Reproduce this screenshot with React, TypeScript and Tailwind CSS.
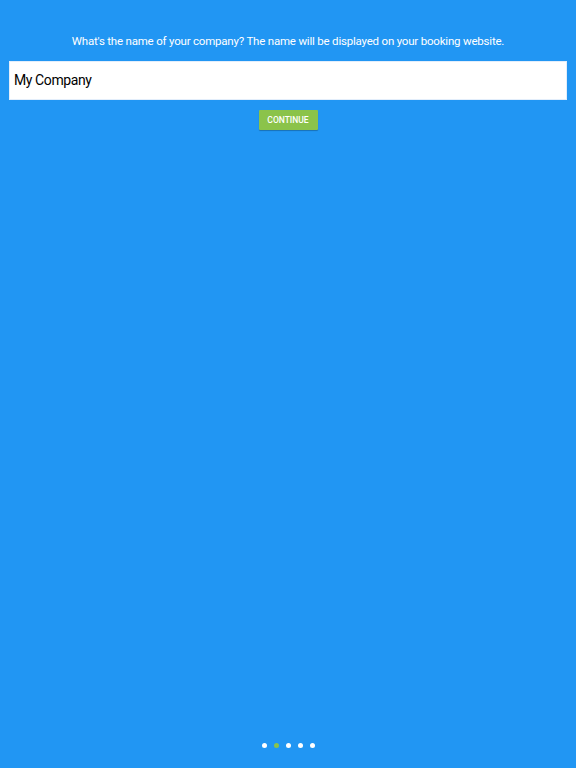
export default function App() {
  const dots = [false, true, false, false, false];

  return (
    <div className="flex h-[768px] w-full flex-col bg-[#2196f3] font-['Roboto',_'Liberation_Sans',_sans-serif]">
      <div className="flex flex-col items-center">
        <p className="mt-[34px] text-center text-[11.5px] leading-[15px] tracking-[-0.2px] text-white">
          What's the name of your company? The name will be displayed on your booking website.
        </p>

        <div className="mt-[12px] w-full px-[9px]">
          <input
            defaultValue="My Company"
            className="h-[39px] w-full border border-[#e3eefb] bg-white px-[4px] pb-[1px] text-[14px] tracking-[-0.4px] text-black outline-none"
          />
        </div>

        <button className="mt-[10px] h-[20px] w-[59px] rounded-[1px] bg-[#8bc34a] text-[8.5px] font-medium text-white shadow-[0_1px_1px_rgba(0,0,0,0.25)]">
          CONTINUE
        </button>
      </div>

      <div className="mt-auto mb-[20px] flex justify-center gap-[7px]">
        {dots.map((active, i) => (
          <span
            key={i}
            className={active ? "h-[5px] w-[5px] rounded-full bg-[#8bc34a]" : "h-[5px] w-[5px] rounded-full bg-white"}
          />
        ))}
      </div>
    </div>
  );
}
